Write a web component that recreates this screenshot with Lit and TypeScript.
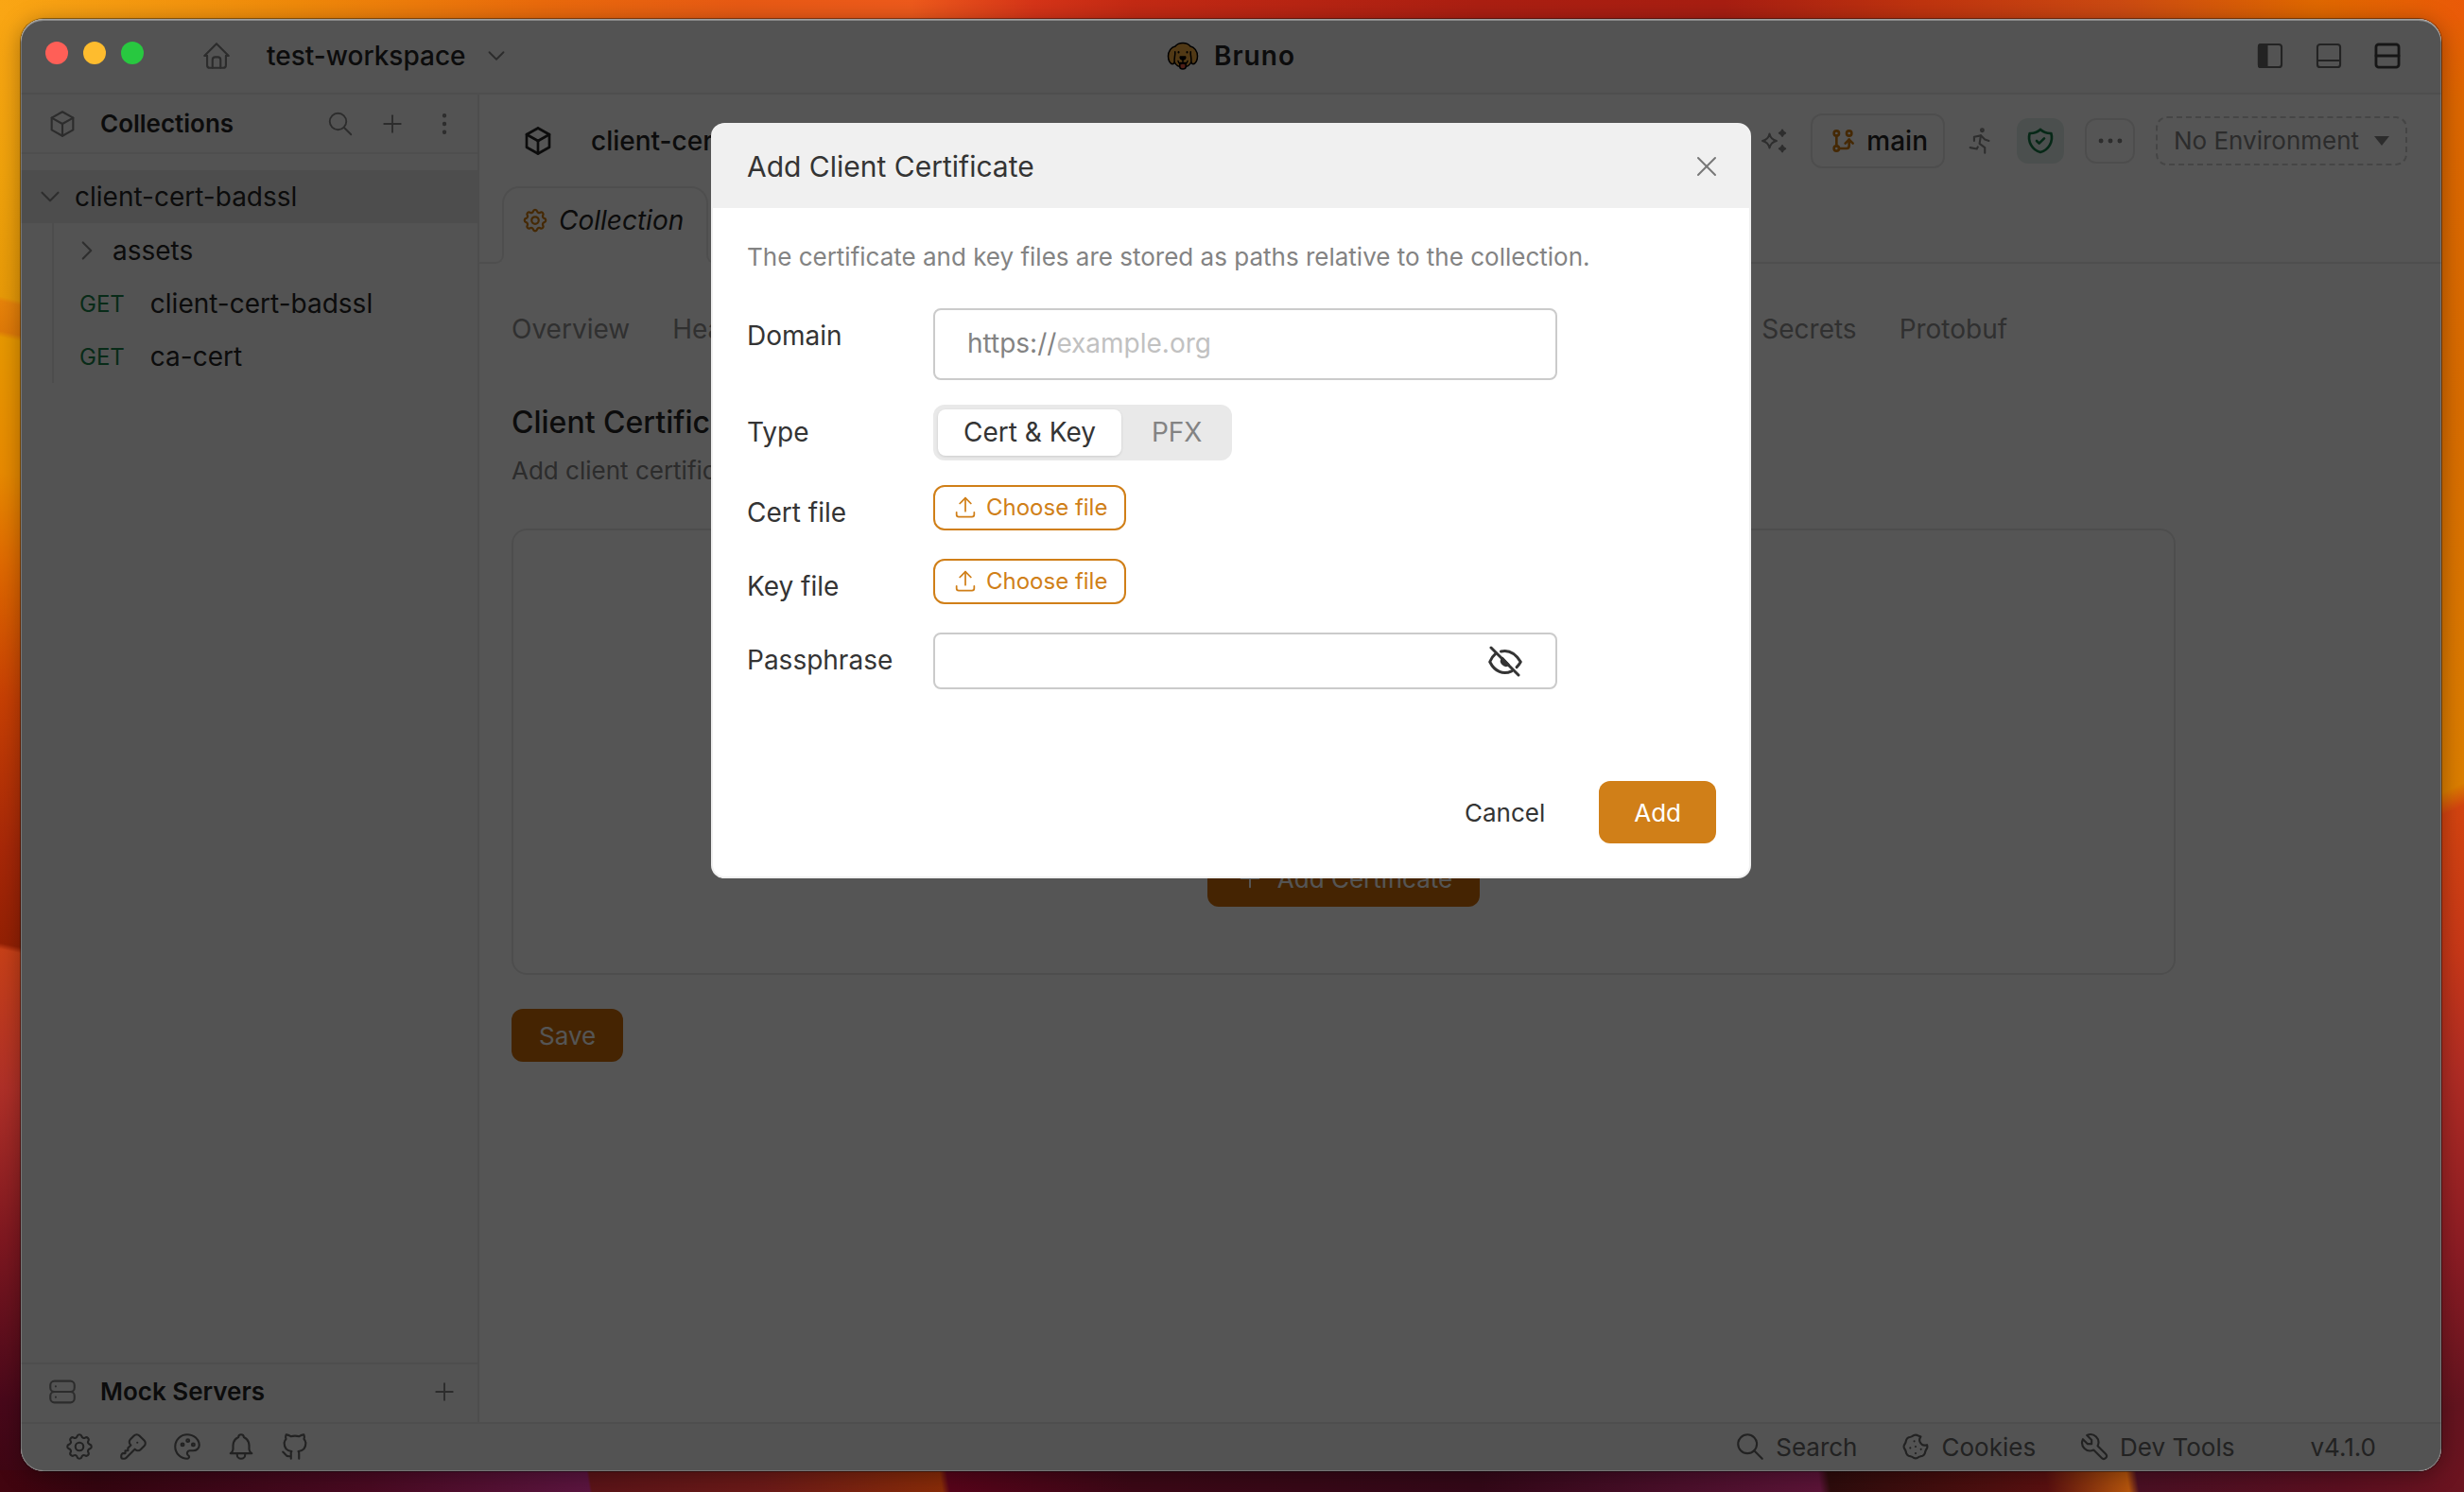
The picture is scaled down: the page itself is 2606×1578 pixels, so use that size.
import { LitElement, html, css, svg, nothing } from "lit";
import { customElement, property, state } from "lit/decorators.js";

const outline: Record<string, string[]> = {
  home: [
    "M5 12l-2 0l9 -9l9 9l-2 0",
    "M5 12v7a2 2 0 0 0 2 2h10a2 2 0 0 0 2 -2v-7",
    "M9 21v-6a2 2 0 0 1 2 -2h2a2 2 0 0 1 2 2v6",
  ],
  box: ["M12 3l8 4.5l0 9l-8 4.5l-8 -4.5l0 -9l8 -4.5", "M12 12l8 -4.5", "M12 12l0 9", "M12 12l-8 -4.5"],
  search: ["M3 10a7 7 0 1 0 14 0a7 7 0 1 0 -14 0", "M21 21l-6 -6"],
  plus: ["M12 5v14", "M5 12h14"],
  close: ["M18 6l-12 12", "M6 6l12 12"],
  dotsVertical: [
    "M11 12a1 1 0 1 0 2 0a1 1 0 1 0 -2 0",
    "M11 19a1 1 0 1 0 2 0a1 1 0 1 0 -2 0",
    "M11 5a1 1 0 1 0 2 0a1 1 0 1 0 -2 0",
  ],
  dots: [
    "M4 12a1 1 0 1 0 2 0a1 1 0 1 0 -2 0",
    "M11 12a1 1 0 1 0 2 0a1 1 0 1 0 -2 0",
    "M18 12a1 1 0 1 0 2 0a1 1 0 1 0 -2 0",
  ],
  chevronDown: ["M6 9l6 6l6 -6"],
  chevronRight: ["M9 6l6 6l-6 6"],
  settings: [
    "M10.325 4.317c.426 -1.756 2.924 -1.756 3.35 0a1.724 1.724 0 0 0 2.573 1.066c1.543 -.94 3.31 .826 2.37 2.37a1.724 1.724 0 0 0 1.065 2.572c1.756 .426 1.756 2.924 0 3.35a1.724 1.724 0 0 0 -1.066 2.573c.94 1.543 -.826 3.31 -2.37 2.37a1.724 1.724 0 0 0 -2.572 1.065c-.426 1.756 -2.924 1.756 -3.35 0a1.724 1.724 0 0 0 -2.573 -1.066c-1.543 .94 -3.31 -.826 -2.37 -2.37a1.724 1.724 0 0 0 -1.065 -2.572c-1.756 -.426 -1.756 -2.924 0 -3.35a1.724 1.724 0 0 0 1.066 -2.573c-.94 -1.543 .826 -3.31 2.37 -2.37c1 .608 2.296 .07 2.572 -1.065z",
    "M9 12a3 3 0 1 0 6 0a3 3 0 0 0 -6 0",
  ],
  key: [
    "M16.555 3.843l3.602 3.602a2.877 2.877 0 0 1 0 4.069l-2.643 2.643a2.877 2.877 0 0 1 -4.069 0l-.301 -.301l-6.558 6.558a2 2 0 0 1 -1.239 .578l-.175 .008h-1.172a1 1 0 0 1 -.993 -.883l-.007 -.117v-1.172a2 2 0 0 1 .467 -1.284l.119 -.13l.414 -.414h2v-2h2v-2l2.144 -2.144l-.301 -.301a2.877 2.877 0 0 1 0 -4.069l2.643 -2.643a2.877 2.877 0 0 1 4.069 0z",
    "M15 9h.01",
  ],
  palette: [
    "M12 21a9 9 0 0 1 0 -18c4.97 0 9 3.582 9 8c0 1.06 -.474 2.078 -1.318 2.828c-.844 .75 -1.989 1.172 -3.182 1.172h-2.5a2 2 0 0 0 -1 3.75a1.3 1.3 0 0 1 -1 2.25",
    "M7.5 10.5a1 1 0 1 0 2 0a1 1 0 1 0 -2 0",
    "M11.5 7.5a1 1 0 1 0 2 0a1 1 0 1 0 -2 0",
    "M15.5 10.5a1 1 0 1 0 2 0a1 1 0 1 0 -2 0",
  ],
  bell: [
    "M10 5a2 2 0 1 1 4 0a7 7 0 0 1 4 6v3a4 4 0 0 0 2 3h-16a4 4 0 0 0 2 -3v-3a7 7 0 0 1 4 -6",
    "M9 17v1a3 3 0 0 0 6 0v-1",
  ],
  github: [
    "M9 19c-4.3 1.4 -4.3 -2.5 -6 -3m12 5v-3.5c0 -1 .1 -1.4 -.5 -2c2.8 -.3 5.5 -1.4 5.5 -6a4.6 4.6 0 0 0 -1.3 -3.2a4.2 4.2 0 0 0 -.1 -3.2s-1.1 -.3 -3.5 1.3a12.3 12.3 0 0 0 -6.2 0c-2.4 -1.6 -3.5 -1.3 -3.5 -1.3a4.2 4.2 0 0 0 -.1 3.2a4.6 4.6 0 0 0 -1.3 3.2c0 4.6 2.7 5.7 5.5 6c-.6 .6 -.6 1.2 -.5 2v3.5",
  ],
  cookie: [
    "M8 13v.01",
    "M12 17v.01",
    "M12 12v.01",
    "M16 14v.01",
    "M11 8v.01",
    "M13.148 3.476l2.667 1.104a4 4 0 0 0 4.656 6.14l.053 .132a3 3 0 0 1 0 2.296q-.745 1.18 -1.024 1.852q-.283 .684 -.66 2.216a3 3 0 0 1 -1.624 1.623q-1.572 .394 -2.216 .661q-.712 .295 -1.852 1.024a3 3 0 0 1 -2.296 0q-1.203 -.754 -1.852 -1.024q-.707 -.292 -2.216 -.66a3 3 0 0 1 -1.623 -1.624q-.397 -1.577 -.661 -2.216q-.298 -.718 -1.024 -1.852a3 3 0 0 1 0 -2.296q.719 -1.116 1.024 -1.852q.257 -.62 .66 -2.216a3 3 0 0 1 1.624 -1.623q1.547 -.384 2.216 -.661q.687 -.285 1.852 -1.024a3 3 0 0 1 2.296 0",
  ],
  tool: ["M7 10h3v-3l-3.5 -3.5a6 6 0 0 1 8 8l6 6a2 2 0 0 1 -3 3l-6 -6a6 6 0 0 1 -8 -8l3.5 3.5"],
  server: [
    "M3 7a3 3 0 0 1 3 -3h12a3 3 0 0 1 3 3v2a3 3 0 0 1 -3 3h-12a3 3 0 0 1 -3 -3z",
    "M3 15a3 3 0 0 1 3 -3h12a3 3 0 0 1 3 3v2a3 3 0 0 1 -3 3h-12a3 3 0 0 1 -3 -3z",
    "M7 8v.01",
    "M7 16v.01",
  ],
  upload: ["M4 17v2a2 2 0 0 0 2 2h12a2 2 0 0 0 2 -2v-2", "M7 9l5 -5l5 5", "M12 4v12"],
  shield: [
    "M12 3a12 12 0 0 0 8.5 3a12 12 0 0 1 -8.5 15a12 12 0 0 1 -8.5 -15a12 12 0 0 0 8.5 -3",
    "M9 12l2 2l4 -4",
  ],
  run: [
    "M12 4a1 1 0 1 0 2 0a1 1 0 1 0 -2 0",
    "M4 17l5 1l.75 -1.5",
    "M15 21l0 -4l-4 -3l1 -6",
    "M7 12l0 -3l5 -1l3 3l3 1",
  ],
  branch: [
    "M5 18a2 2 0 1 0 4 0a2 2 0 1 0 -4 0",
    "M5 6a2 2 0 1 0 4 0a2 2 0 1 0 -4 0",
    "M15 6a2 2 0 1 0 4 0a2 2 0 1 0 -4 0",
    "M7 8l0 8",
    "M9 18h6a2 2 0 0 0 2 -2v-5",
    "M14 14l3 -3l3 3",
  ],
  panelBottom: [
    "M3.500 5.500a2 2 0 0 1 2 -2h13a2 2 0 0 1 2 2v13a2 2 0 0 1 -2 2h-13a2 2 0 0 1 -2 -2z",
    "M3.500 15.500h17",
  ],
  panelRows: [
    "M3.500 5.500a2 2 0 0 1 2 -2h13a2 2 0 0 1 2 2v13a2 2 0 0 1 -2 2h-13a2 2 0 0 1 -2 -2z",
    "M3.500 12h17",
  ],
};

const icon = (name: string, size = 34, weight = 1.5) => html`
  <svg width=${size} height=${size} viewBox="0 0 24 24" fill="none" stroke="currentColor"
    stroke-width=${weight} stroke-linecap="round" stroke-linejoin="round" aria-hidden="true">
    ${outline[name].map((d) => svg`<path d=${d}></path>`)}
  </svg>`;

const panelLeft = html`
  <svg width="34" height="34" viewBox="0 0 24 24" fill="none" stroke="currentColor" stroke-width="1.5" aria-hidden="true">
    <rect x="3.500" y="3.500" width="17" height="17" rx="2"></rect>
    <path d="M5 3.500h4.500v17h-4.500a1.500 1.500 0 0 1 -1.500 -1.500v-14a1.500 1.500 0 0 1 1.500 -1.500z" fill="currentColor"></path>
  </svg>`;

const sparkles = html`
  <svg width="32" height="32" viewBox="0 0 32 32" fill="none" stroke="currentColor" stroke-width="2" stroke-linejoin="round" aria-hidden="true">
    <path d="M10.500 8.500c1 4.600 3 6.500 7.500 7.500c-4.500 1 -6.500 2.900 -7.500 7.500c-1 -4.600 -3 -6.500 -7.500 -7.500c4.500 -1 6.500 -2.900 7.500 -7.500z"></path>
    <path d="M24 4.500c.5 1.900 1.300 2.700 3.200 3.200c-1.900 .5 -2.700 1.300 -3.200 3.200c-.5 -1.900 -1.300 -2.700 -3.200 -3.200c1.900 -.5 2.700 -1.300 3.200 -3.200z" fill="currentColor"></path>
    <path d="M24 21c.5 1.900 1.300 2.700 3.200 3.200c-1.900 .5 -2.700 1.300 -3.200 3.200c-.5 -1.900 -1.300 -2.700 -3.200 -3.200c1.900 -.5 2.700 -1.300 3.200 -3.200z" fill="currentColor"></path>
  </svg>`;

const eyeOff = html`
  <svg width="36" height="33" viewBox="0 0 36 33" fill="none" stroke="currentColor" stroke-width="3" stroke-linecap="round" stroke-linejoin="round" aria-hidden="true">
    <path d="M13.500 6c8.500 -2 15.500 2.500 20.800 11c-1.200 2.200 -2.600 4 -4.200 5.600"></path>
    <path d="M8 8.200c-2.700 2.200 -4.700 5.200 -6.300 8.800c5.300 10.500 14.300 14 23 9.800"></path>
    <path d="M15 12.800a5 5 0 0 0 6.800 7.200z" fill="currentColor" stroke-width="2"></path>
    <path d="M3 2l29 29"></path>
  </svg>`;

const dog = html`
  <svg width="34" height="30" viewBox="0 0 34 30" stroke="#000" stroke-width="1.500" stroke-linecap="round" stroke-linejoin="round" aria-hidden="true">
    <path d="M17 1.500c-4 0 -6.500 1.500 -8 3.500c-4 .5 -7.500 5 -7.500 10.500c0 4.500 2 8 4.500 8.300c1.200 0 1.800 -.8 2.200 -2c1.400 3.200 4.600 5.200 8.800 5.200s7.400 -2 8.800 -5.200c.4 1.200 1 2 2.200 2c2.500 -.3 4.500 -3.800 4.500 -8.300c0 -5.500 -3.500 -10 -7.500 -10.500c-1.500 -2 -4 -3.500 -8 -3.500z" fill="#f4aa41"></path>
    <path d="M8.200 21.800c-.8 -3.300 1 -7 .6 -11M25.800 21.800c.8 -3.300 -1 -7 -.6 -11" fill="none"></path>
    <path d="M13.800 22.500v4c0 3.300 6.400 3.300 6.400 0v-4z" fill="#ea5a47"></path>
    <path d="M17 19v3.500m0 0c-1.500 1.500 -4.500 1.200 -5 -2m5 2c1.500 1.500 4.500 1.200 5 -2" fill="none"></path>
    <path d="M14.300 16h5.400c.6 1.800 -1 3.200 -2.700 3.200s-3.300 -1.400 -2.700 -3.200z" fill="#000"></path>
    <path d="M12.500 11v.6M21.500 11v.6" stroke-width="2" fill="none"></path>
  </svg>`;

const base = css`
  * { box-sizing: border-box; }
  button, input, select {
    font: inherit;
    color: inherit;
    background: none;
    border: 0;
    margin: 0;
    padding: 0;
    min-width: 0;
  }
  button { display: flex; align-items: center; justify-content: center; white-space: nowrap; }
  h1, h2, p, ul { margin: 0; padding: 0; font-weight: inherit; font-size: inherit; }
  ul { list-style: none; }
  svg { display: block; flex: none; }
`;

@customElement("title-bar")
export class TitleBar extends LitElement {
  static styles = [base, css`
    :host {
      display: grid;
      grid-template-columns: 1fr auto 1fr;
      align-items: center;
      height: 80px;
      padding: 0 26px;
      background: #f8f8f8;
      border-bottom: 2px solid #ebebeb;
      font-weight: 500;
    }
    .start, .end, .brand { display: flex; align-items: center; }
    .lights { display: flex; gap: 16px; z-index: 2; margin-right: 60px; padding-bottom: 6px; }
    .light { width: 24px; height: 24px; border-radius: 50%; }
    .red { background: #ff5f57; }
    .amber { background: #febc2e; }
    .green { background: #28c840; }
    .home { color: #838383; margin-right: 36px; }
    .workspace { gap: 17px; }
    .workspace svg { color: #838383; }
    .brand { gap: 16px; font-weight: 600; letter-spacing: 1px; }
    .end { justify-content: flex-end; gap: 28px; padding-right: 14px; color: #6a6a6a; }
    .active { color: #444; }
  `];

  render() {
    return html`
      <div class="start">
        <div class="lights">
          <button class="light red" aria-label="Close window"></button>
          <button class="light amber" aria-label="Minimise window"></button>
          <button class="light green" aria-label="Zoom window"></button>
        </div>
        <button class="home" aria-label="Home">${icon("home")}</button>
        <button class="workspace">test-workspace ${icon("chevronDown", 30)}</button>
      </div>
      <div class="brand">${dog}<span>Bruno</span></div>
      <div class="end">
        <button aria-label="Toggle sidebar">${panelLeft}</button>
        <button aria-label="Toggle panel">${icon("panelBottom")}</button>
        <button class="active" aria-label="Switch layout">${icon("panelRows", 34, 2)}</button>
      </div>`;
  }
}

@customElement("side-bar")
export class SideBar extends LitElement {
  static styles = [base, css`
    :host {
      display: flex;
      flex-direction: column;
      background: #f8f8f8;
      border-right: 2px solid #e8e8e8;
    }
    .head {
      display: flex;
      align-items: center;
      height: 63px;
      padding: 0 20px 0 27px;
      font-size: 26px;
      font-weight: 600;
      border-bottom: 2px solid #ebebeb;
    }
    .mock { margin-top: auto; padding-bottom: 4px; border-top: 2px solid #ebebeb; border-bottom: 0; }
    .head svg { color: #838383; }
    .title { flex: 1; margin-left: 23px; }
    .tools { display: flex; gap: 25px; }
    .tree { padding-top: 17px; }
    .row { width: 100%; height: 56px; justify-content: flex-start; }
    .row svg { color: #8a8a8a; }
    .root { background: #e7e7e7; padding-left: 14px; gap: 9px; }
    .children { margin-left: 33px; padding-top: 1px; border-left: 2px solid #e6e6e6; }
    .folder { padding-left: 18px; gap: 10px; }
    .request { padding-left: 27px; gap: 27px; }
    .method { color: #1a8048; font-size: 24px; }
  `];

  private requests = ["client-cert-badssl", "ca-cert"];

  render() {
    return html`
      <div class="head">
        ${icon("box")}
        <h2 class="title">Collections</h2>
        <div class="tools">
          <button aria-label="Search collections">${icon("search", 30)}</button>
          <button aria-label="Add collection">${icon("plus", 30)}</button>
          <button aria-label="More actions">${icon("dotsVertical", 30)}</button>
        </div>
      </div>
      <div class="tree">
        <button class="row root">${icon("chevronDown")}client-cert-badssl</button>
        <ul class="children">
          <li><button class="row folder">${icon("chevronRight")}assets</button></li>
          ${this.requests.map((name) => html`
            <li><button class="row request"><span class="method">GET</span>${name}</button></li>`)}
        </ul>
      </div>
      <div class="head mock">
        ${icon("server")}
        <h2 class="title">Mock Servers</h2>
        <button aria-label="Add mock server">${icon("plus", 30)}</button>
      </div>`;
  }
}

@customElement("collection-view")
export class CollectionView extends LitElement {
  static styles = [base, css`
    :host { display: flex; flex-direction: column; background: #fff; min-width: 0; }
    .head {
      display: flex;
      align-items: center;
      gap: 22px;
      height: 97px;
      padding: 0 36px 0 44px;
    }
    .name { flex: 1; margin-left: 16px; font-weight: 500; }
    .tool { width: 32px; color: #8a8a8a; }
    .branch { height: 58px; padding: 0 16px; gap: 9px; border: 2px solid #e8e8e8; border-radius: 12px; font-weight: 500; }
    .branch svg { color: #cf7b10; }
    .chip { width: 50px; height: 48px; border-radius: 12px; }
    .safe { background: #e2eeea; color: #157a46; }
    .more { width: 53px; border: 2px solid #e8e8e8; color: #838383; }
    .env {
      display: flex;
      align-items: center;
      height: 52px;
      gap: 15px;
      padding: 0 17px;
      border: 2px dashed #cfcfcf;
      border-radius: 12px;
      color: #838383;
      font-size: 26px;
    }
    .env select { appearance: none; }
    .strip { display: flex; height: 82px; }
    .lead, .rest { border-bottom: 2px solid #ebebeb; }
    .lead { width: 17px; }
    .rest { flex: 1; }
    .flare { align-self: flex-end; width: 9px; height: 12px; border: 0 solid #ebebeb; border-bottom-width: 2px; }
    .left { border-right-width: 2px; border-bottom-right-radius: 9px; margin-right: -2px; }
    .right { border-left-width: 2px; border-bottom-left-radius: 9px; margin-left: -2px; }
    .tab {
      height: 72px;
      width: 218px;
      padding: 0 18px 2px;
      gap: 10px;
      justify-content: flex-start;
      border: 2px solid #ebebeb;
      border-bottom: 0;
      border-radius: 18px 18px 0 0;
      font-style: italic;
    }
    .tab svg { color: #cf7b10; }
    .body { padding: 49px 34px; }
    .sections { display: flex; gap: 45px; line-height: 40px; color: #909090; overflow: hidden; }
    .heading { margin-top: 59px; font-size: 32px; line-height: 40px; font-weight: 500; }
    .lede { margin-top: 11px; font-size: 26px; line-height: 40px; color: #838383; }
    .card {
      display: flex;
      align-items: flex-end;
      justify-content: center;
      max-width: 1760px;
      height: 472px;
      margin: 41px 0 36px;
      padding-bottom: 70px;
      border: 2px solid #e8e8e8;
      border-radius: 16px;
    }
    .primary { background: #cf6e08; color: #fff; border-radius: 12px; font-size: 26px; padding: 0 29px; }
    .add { height: 60px; gap: 13px; }
    .save { height: 56px; }
  `];

  private sections = [
    "Overview", "Headers", "Vars", "Auth", "Script", "Tests", "Presets",
    "Proxy", "Client Certificates", "Secrets", "Protobuf",
  ];

  render() {
    return html`
      <div class="head">
        ${icon("box", 36, 1.8)}
        <h1 class="name">client-cert-badssl</h1>
        <button class="tool" aria-label="Assistant">${sparkles}</button>
        <button class="branch">${icon("branch", 32, 2)}main</button>
        <button class="tool" aria-label="Run collection">${icon("run")}</button>
        <button class="chip safe" aria-label="Safe mode">${icon("shield", 32, 2)}</button>
        <button class="chip more" aria-label="More">${icon("dots")}</button>
        <label class="env">
          <select aria-label="Environment"><option>No Environment</option></select>
          <svg width="16" height="10" viewBox="0 0 16 10" fill="currentColor" aria-hidden="true"><path d="M0 0h16l-8 10z"></path></svg>
        </label>
      </div>
      <div class="strip">
        <div class="lead"></div>
        <div class="flare left"></div>
        <button class="tab">${icon("settings", 30, 1.8)}Collection</button>
        <div class="flare right"></div>
        <div class="rest"></div>
      </div>
      <div class="body">
        <nav class="sections">${this.sections.map((s) => html`<button>${s}</button>`)}</nav>
        <h2 class="heading">Client Certificates</h2>
        <p class="lede">Add client certificates to be used for specific domains.</p>
        <div class="card">
          <button class="primary add">${icon("plus", 32)}Add Certificate</button>
        </div>
        <button class="primary save">Save</button>
      </div>`;
  }
}

@customElement("status-bar")
export class StatusBar extends LitElement {
  static styles = [base, css`
    :host {
      display: flex;
      align-items: center;
      height: 52px;
      padding: 0 69px 2px 45px;
      background: #f8f8f8;
      border-top: 2px solid #ebebeb;
      color: #666;
      font-size: 26px;
    }
    .icons { display: flex; gap: 23px; flex: 1; }
    .links { display: flex; gap: 45px; }
    .link { gap: 10px; }
    .version { margin-left: 80px; }
  `];

  render() {
    return html`
      <div class="icons">
        <button aria-label="Preferences">${icon("settings")}</button>
        <button aria-label="Secrets">${icon("key")}</button>
        <button aria-label="Theme">${icon("palette")}</button>
        <button aria-label="Notifications">${icon("bell")}</button>
        <button aria-label="GitHub">${icon("github")}</button>
      </div>
      <div class="links">
        <button class="link">${icon("search")}Search</button>
        <button class="link">${icon("cookie")}Cookies</button>
        <button class="link">${icon("tool")}Dev Tools</button>
      </div>
      <span class="version">v4.1.0</span>`;
  }
}

@customElement("certificate-dialog")
export class CertificateDialog extends LitElement {
  @property() heading = "Add Client Certificate";
  @state() private kind = "cert";
  @state() private masked = true;

  static styles = [base, css`
    :host {
      display: block;
      width: 1100px;
      max-width: 90%;
      overflow: hidden;
      background: #fff;
      border: 2px solid #f0f0f0;
      border-radius: 14px;
    }
    .head {
      display: flex;
      align-items: center;
      justify-content: space-between;
      height: 88px;
      padding: 0 27px 0 36px;
      background: #f0f0f0;
      font-size: 30px;
    }
    .close { color: #777; }
    .body { padding: 32px 36px 0; }
    .note { font-size: 26px; line-height: 40px; color: #838383; }
    .form { display: grid; gap: 26px; margin-top: 34px; }
    .field { display: grid; grid-template-columns: 197px 660px; align-items: start; min-height: 52px; }
    .label { padding-top: 9px; line-height: 40px; }
    .input { display: flex; align-items: center; border: 2px solid #cbcbcb; border-radius: 8px; height: 60px; }
    .domain { height: 76px; padding: 0 34px 2px; }
    .prefix { color: #838383; }
    .input input { flex: 1; outline: 0; height: 40px; }
    .input input::placeholder { color: #c1c1c1; opacity: 1; }
    .secret { padding: 0 35px 0 24px; }
    .toggle { display: flex; justify-self: start; height: 59px; padding: 5px; background: #e9e9e9; border-radius: 12px; }
    .option { display: flex; align-items: center; padding: 0 27px 2px; border-radius: 8px; color: #838383; }
    .option.on { background: #fff; color: #343434; box-shadow: 0 1px 3px rgba(0, 0, 0, 0.12); }
    .option input { appearance: none; width: 0; height: 0; }
    .option + .option { padding-left: 32px; }
    .file {
      justify-self: start;
      height: 48px;
      padding: 0 18px 2px;
      gap: 8px;
      border: 2px solid #d07f18;
      border-radius: 12px;
      color: #d07f18;
      font-size: 24px;
    }
    .actions { display: flex; justify-content: flex-end; gap: 20px; padding: 97px 35px 35px; font-size: 26px; }
    .action { height: 66px; padding: 0 37px; border-radius: 12px; }
    .confirm { background: #d07f18; color: #fff; }
  `];

  private option(value: string, text: string) {
    const on = this.kind === value;
    return html`
      <label class="option ${on ? "on" : ""}">
        <input type="radio" name="kind" .checked=${on} @change=${() => (this.kind = value)}>${text}
      </label>`;
  }

  private file(id: string, text: string) {
    return html`
      <div class="field">
        <label class="label" for=${id}>${text}</label>
        <button class="file" id=${id}>${icon("upload", 28)}Choose file</button>
      </div>`;
  }

  render() {
    return html`
      <div class="head">
        <h2>${this.heading}</h2>
        <button class="close" aria-label="Close">${icon("close", 36, 1.3)}</button>
      </div>
      <div class="body">
        <p class="note">The certificate and key files are stored as paths relative to the collection.</p>
        <div class="form">
          <div class="field">
            <label class="label" for="domain">Domain</label>
            <div class="input domain">
              <span class="prefix">https://</span>
              <input id="domain" type="text" placeholder="example.org">
            </div>
          </div>
          <div class="field" role="radiogroup" aria-labelledby="type">
            <span class="label" id="type">Type</span>
            <div class="toggle">${this.option("cert", "Cert & Key")}${this.option("pfx", "PFX")}</div>
          </div>
          ${this.kind === "cert" ? html`${this.file("cert", "Cert file")}${this.file("key", "Key file")}` : nothing}
          <div class="field">
            <label class="label" for="pass">Passphrase</label>
            <div class="input secret">
              <input id="pass" type=${this.masked ? "password" : "text"}>
              <button aria-label="Show passphrase" @click=${() => (this.masked = !this.masked)}>${eyeOff}</button>
            </div>
          </div>
        </div>
      </div>
      <div class="actions">
        <button class="action">Cancel</button>
        <button class="action confirm">Add</button>
      </div>`;
  }
}

@customElement("app-root")
export class AppRoot extends LitElement {
  static styles = [base, css`
    :host {
      display: flex;
      box-sizing: border-box;
      min-height: 100vh;
      padding: 20px 24px 22px 22px;
      font-family: Inter, "Liberation Sans", sans-serif;
      font-size: 28px;
      color: #262626;
      background:
        linear-gradient(90deg, #faa614 0, #f08a0a 12%, #ea6a0c 22%, #e85a14 30%, #ee5a1c 37%, #d63418 42%, #c42a14 46%, #ac1f12 60%, #a81e12 70%, #c0340f 78%, #cc4a12 86%, #e06800 94%, #ea5a08 100%) top / 100% 21px no-repeat,
        linear-gradient(81deg, #42040f 0, #350510 4%, #4a0a22 15%, #5c1540 23.9%, #5c1418 24%, #6c1a18 31%, #8a2c08 38.2%, #58041a 38.5%, #3c0816 46%, #340818 60%, #5c1438 73.8%, #2e0c0c 74.2%, #5a1010 83%, #b8560c 86.3%, #4c1024 86.7%, #5c0f20 95%, #6c1420 100%) bottom / 100% 23px no-repeat,
        linear-gradient(192deg, #faa614 0, #f0a20c 12%, #e89a08 20.3%, #e8830a 20.6%, #e07a08 22.6%, #e89800 23%, #e88a00 32%, #e06a00 38%, #c84004 47%, #a82808 57%, #942004 63.4%, #c84018 63.8%, #b03028 73%, #801820 83%, #48081a 94%, #3c0612 100%) left / 40px 100% no-repeat,
        linear-gradient(155deg, #ea5a08 0, #dc6600 8%, #d86c00 28%, #dc7e00 53%, #d44410 54.5%, #c83818 64%, #b02c24 72%, #8c1c24 84%, #64141f 94%, #6c1420 100%) right / 40px 100% no-repeat;
    }
    .window {
      position: relative;
      flex: 1;
      min-width: 0;
      display: grid;
      grid-template-rows: auto 1fr auto;
      border-radius: 24px;
      overflow: hidden;
      box-shadow: 0 0 0 1px rgba(0, 0, 0, 0.4), 0 4px 24px rgba(0, 0, 0, 0.35);
    }
    .workbench { display: grid; grid-template-columns: 485px 1fr; }
    .backdrop {
      position: absolute;
      inset: 0;
      z-index: 1;
      display: flex;
      justify-content: center;
      align-items: flex-start;
      padding-top: 110px;
      border-radius: 24px;
      background: rgba(0, 0, 0, 0.667);
      box-shadow: inset 0 0 0 1px rgba(255, 255, 255, 0.2), inset 0 2px 0 rgba(255, 255, 255, 0.3);
      color: #343434;
    }
  `];

  render() {
    return html`
      <div class="window">
        <title-bar></title-bar>
        <div class="workbench">
          <side-bar></side-bar>
          <collection-view></collection-view>
        </div>
        <status-bar></status-bar>
        <div class="backdrop">
          <certificate-dialog role="dialog" aria-modal="true" aria-label="Add Client Certificate"></certificate-dialog>
        </div>
      </div>`;
  }
}
